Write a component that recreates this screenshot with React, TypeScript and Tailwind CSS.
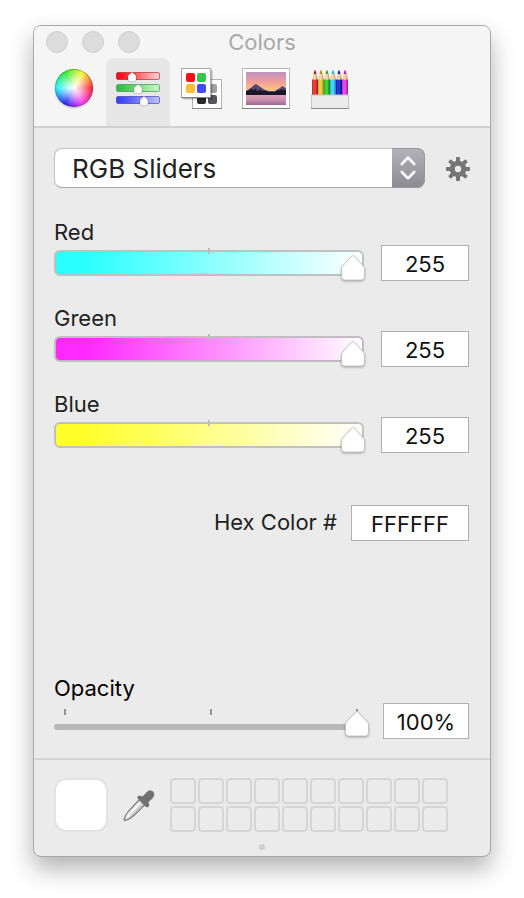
import React, { useState } from "react";
import clsx from "clsx";

interface IChannel {
  id: "red" | "green" | "blue";
  label: string;
  track: string;
}

const channels: IChannel[] = [
  { id: "red", label: "Red", track: "border-[#bcc2c2] from-[#2bffff]" },
  { id: "green", label: "Green", track: "border-[#c4bcc4] from-[#ff28ff]" },
  { id: "blue", label: "Blue", track: "border-[#c2c2bc] from-[#ffff2b]" },
];

const pencils = [
  { body: "#e0403c", dark: "#a82322", tip: "#b3161c" },
  { body: "#e6cc48", dark: "#a98c20", tip: "#b98a1c" },
  { body: "#3fd03c", dark: "#15901c", tip: "#1fae26" },
  { body: "#52cdf5", dark: "#1c8fc8", tip: "#27b4e4" },
  { body: "#2a35d8", dark: "#10149a", tip: "#1b1fc0" },
  { body: "#ea48e6", dark: "#b01cae", tip: "#c81fc6" },
];

const WheelIcon = () => (
  <span className="relative block size-[38px] rounded-full bg-[conic-gradient(from_90deg,#ff2a3c,#ff3cf0,#2a2af0,#2af5ff,#35ea35,#fff53c,#ff2a3c)] shadow-[0_1px_2px_rgba(0,0,0,0.25)]">
    <span className="absolute inset-0 rounded-full border border-black/25 bg-[radial-gradient(circle,#ffffff_0%,rgba(255,255,255,0.6)_30%,rgba(255,255,255,0)_68%)]" />
  </span>
);

const SlidersIcon = () => (
  <svg viewBox="0 0 64 68" className="h-full w-16">
    <defs>
      <linearGradient id="bar-red">
        <stop offset="0.1" stopColor="#fb0d1b" />
        <stop offset="1" stopColor="#fcd3d4" />
      </linearGradient>
      <linearGradient id="bar-green">
        <stop offset="0.1" stopColor="#35c048" />
        <stop offset="1" stopColor="#c9fbc9" />
      </linearGradient>
      <linearGradient id="bar-blue">
        <stop offset="0.1" stopColor="#3d43fa" />
        <stop offset="1" stopColor="#bfc1fb" />
      </linearGradient>
    </defs>
    {[
      { y: 14, x: 26, fill: "url(#bar-red)", stroke: "#a81820" },
      { y: 26, x: 32, fill: "url(#bar-green)", stroke: "#2f8a3c" },
      { y: 38, x: 38, fill: "url(#bar-blue)", stroke: "#2f34a8" },
    ].map((bar) => (
      <g key={bar.y}>
        <rect x="10.5" y={bar.y + 0.5} width="43" height="7" rx="1.5" fill={bar.fill} stroke={bar.stroke} strokeOpacity="0.6" />
        <path
          d={`M${bar.x} ${bar.y} l4 3.8 v4.2 q0 1.4 -1.4 1.4 h-5.2 q-1.4 0 -1.4 -1.4 v-4.2 z`}
          fill="#fff"
          stroke="#000"
          strokeOpacity="0.28"
          strokeWidth="0.7"
        />
      </g>
    ))}
  </svg>
);

const PalettesIcon = () => (
  <svg viewBox="0 0 64 68" className="h-full w-16">
    <rect x="22.5" y="21.5" width="29" height="29" fill="#fff" stroke="#b4b4b4" />
    <path d="M22 50.5h30" stroke="#858585" />
    <rect x="38" y="26" width="9" height="9" rx="2" fill="#a0a0a4" />
    <rect x="27" y="37" width="9" height="9" rx="2" fill="#2b2b2d" />
    <rect x="38" y="37" width="9" height="9" rx="2" fill="#56575a" />
    <rect x="13" y="12" width="30" height="30" rx="1" fill="#000" opacity="0.12" />
    <rect x="12" y="11" width="30" height="30" rx="1" fill="#000" opacity="0.15" />
    <rect x="11.5" y="10.5" width="29" height="29" fill="#fff" stroke="#a8a8a8" />
    <path d="M11 39.5h30" stroke="#808080" />
    <rect x="16" y="15" width="9" height="9" rx="2" fill="#fa0f1c" />
    <rect x="27" y="15" width="9" height="9" rx="2" fill="#35c74b" />
    <rect x="16" y="26" width="9" height="9" rx="2" fill="#fdbe33" />
    <rect x="27" y="26" width="9" height="9" rx="2" fill="#434af2" />
  </svg>
);

const PictureIcon = () => (
  <svg viewBox="0 0 64 68" className="h-full w-16">
    <defs>
      <linearGradient id="sky" x2="0" y2="1">
        <stop offset="0" stopColor="#bf92c0" />
        <stop offset="0.4" stopColor="#ee9c9c" />
        <stop offset="0.75" stopColor="#fdc182" />
        <stop offset="1" stopColor="#fdd08c" />
      </linearGradient>
      <linearGradient id="lake" x2="0" y2="1">
        <stop offset="0" stopColor="#e0a0ba" />
        <stop offset="0.4" stopColor="#d294b4" />
        <stop offset="1" stopColor="#9c6694" />
      </linearGradient>
    </defs>
    <rect x="8.5" y="10.5" width="47" height="40" fill="#fff" stroke="#b8b8b8" />
    <path d="M8 50.5h48" stroke="#808080" />
    <rect x="12" y="14" width="40" height="23" fill="url(#sky)" />
    <rect x="12" y="37" width="40" height="10" fill="url(#lake)" />
    <path d="M12 33l3-2 3-2 2-2 2-1 3 2 3 2 3 2 4 1h6l3-2 2-1 2-2 4 2v7H12z" fill="#5a4672" />
    <path d="M12 33l3-0.5 3-2 1 2 3-2 1 3 3-2 2 1.5 3-0.5 4 1.5h6l3-2 1 1 2-1.5 5 0.5v5H12z" fill="#1b1628" />
  </svg>
);

const PencilsIcon = () => (
  <svg viewBox="0 0 64 68" className="h-full w-16">
    {pencils.map((p, i) => (
      <g key={p.body} transform={`translate(${14 + i * 6} 12)`}>
        <path d="M0 10L1.6 3.6h2.8L6 10z" fill="#f0d2a8" />
        <path d="M4 3.6h0.5L6 10H4.7z" fill="#c49a68" />
        <path d="M1.6 4L2.4 0.6q0.6-0.9 1.2 0L4.4 4z" fill={p.tip} />
        <path d="M0 10l1.5-0.8L3 10l1.5-0.8L6 10v15H0z" fill={p.body} />
        <path d="M4.4 9.4L6 10v15H4.4z" fill={p.dark} />
        <path d="M0 10l0.8-0.4V25H0z" fill={p.dark} opacity="0.6" />
      </g>
    ))}
    <rect x="13.5" y="37" width="37" height="13.5" fill="#ececec" stroke="#c4c4c4" />
    <path d="M13 50.5h38" stroke="#8c8c8c" />
  </svg>
);

const GearIcon = () => (
  <svg viewBox="0 0 24 24" className="size-6">
    <g fill="#757575">
      {[0, 45, 90, 135].map((deg) => (
        <rect key={deg} x="10" y="0" width="4" height="24" rx="0.8" transform={`rotate(${deg} 12 12)`} />
      ))}
      <circle cx="12" cy="12" r="8.3" />
    </g>
    <circle cx="12" cy="12" r="3.2" fill="#ebebeb" />
  </svg>
);

const DropperIcon = () => (
  <svg viewBox="0 0 32 32" className="size-8">
    <defs>
      <linearGradient id="glass" x1="0.3" y1="0.3" x2="0.7" y2="0.7">
        <stop offset="0" stopColor="#f8f8f8" />
        <stop offset="0.5" stopColor="#d8d8d8" />
        <stop offset="1" stopColor="#b0b0b0" />
      </linearGradient>
    </defs>
    <path
      d="M16.5 10.5L6 21.5C3.4 24.4 1.9 27.2 1.2 30c-0.3 1.2 0.6 1.6 1.7 1.3C5.7 30.4 8.7 28.8 11.3 26.2L21.8 15.8z"
      fill="url(#glass)"
      stroke="#747474"
      strokeWidth="1.1"
    />
    <path d="M17.5 14L7 25 3.6 29.2" stroke="#fff" strokeWidth="1.6" fill="none" opacity="0.8" />
    <path
      d="M15 7.2c1.2-1.1 2.4-0.9 3.6 0.1l1.2-0.1 4-4.2c2-2.1 4.8-1.9 6.3-0.4s1.7 4.3-0.3 6.4l-4.1 4.1-0.2 1.2c1 1.2 1 2.3 0 3.4-0.8 0.8-2 0.8-2.8 0L15 10.1c-0.8-0.8-0.9-2 0-2.9z"
      fill="#717171"
    />
  </svg>
);

const ThumbShape = () => (
  <svg viewBox="0 0 24 26" className="block h-[26px] w-6 overflow-visible drop-shadow-[0_1px_1px_rgba(0,0,0,0.3)]">
    <path
      d="M10.8 1.2q1.2-1.2 2.4 0L22.4 11q1.1 1.2 1.1 2.8v8q0 3.2-3.2 3.2H3.7q-3.2 0-3.2-3.2v-8Q0.5 12.2 1.6 11z"
      fill="#fff"
      stroke="#bdbdbd"
      strokeWidth="0.8"
    />
  </svg>
);

const tabs = [
  { label: "Color Wheel", icon: <WheelIcon /> },
  { label: "Color Sliders", icon: <SlidersIcon /> },
  { label: "Color Palettes", icon: <PalettesIcon /> },
  { label: "Image Palettes", icon: <PictureIcon /> },
  { label: "Pencils", icon: <PencilsIcon /> },
];

const fieldClass =
  "h-9 shrink-0 border border-[#b0b0b0] bg-white pt-0.5 text-center text-[22px] text-[#111111] outline-none";

// left edge of a 24px thumb for a 0..1 position
const thumbLeft = (pos: number) => `calc(${pos * 100}% - ${pos * 24}px)`;

const App = () => {
  const [tab, setTab] = useState(1);
  const [rgb, setRgb] = useState({ red: 255, green: 255, blue: 255 });
  const [opacity, setOpacity] = useState(100);

  const hex = [rgb.red, rgb.green, rgb.blue]
    .map((v) => v.toString(16).padStart(2, "0"))
    .join("")
    .toUpperCase();

  const setChannel = (id: IChannel["id"], value: string) =>
    setRgb({ ...rgb, [id]: Math.max(0, Math.min(255, Number(value) || 0)) });

  return (
    <div className="bg-white px-[33px] pt-[25px] pb-[41px] font-['Inter','Liberation_Sans',sans-serif] text-[#222222]">
      <div className="overflow-hidden rounded-lg border border-[#a9a9a9] bg-[#ebebeb] shadow-[0_12px_24px_rgba(0,0,0,0.3)]">
        <header className="border-b-2 border-[#d0d0d0] bg-[#f5f5f5]">
          <div className="grid h-8 grid-cols-[1fr_auto_1fr] items-center px-3">
            <div className="flex gap-[14px]">
              {["Close", "Minimize", "Zoom"].map((name) => (
                <button
                  key={name}
                  aria-label={name}
                  className="size-[22px] rounded-full border border-[#cfcfcf] bg-[#dcdcdc]"
                />
              ))}
            </div>
            <h1 className="text-[22px] leading-[30px] text-[#a9a9a9]">Colors</h1>
          </div>
          <nav className="flex h-[68px] pl-2">
            {tabs.map((t, i) => (
              <button
                key={t.label}
                aria-label={t.label}
                onClick={() => setTab(i)}
                className={clsx(
                  "flex w-16 justify-center rounded-t-lg",
                  i === 0 && "pt-[11px]",
                  i === tab && "bg-[#e7e7e7]"
                )}
              >
                {t.icon}
              </button>
            ))}
          </nav>
        </header>

        <main className="pt-5 pr-[21px] pb-[19px] pl-5">
          <div className="-mr-px flex items-center gap-[21px]">
            <div className="relative flex-1">
              <select
                aria-label="Slider mode"
                className="h-10 w-full appearance-none rounded-lg border border-[#c2c2c2] border-b-[#a6a6a6] bg-white pr-10 pl-[17px] text-[26px] outline-none"
              >
                <option>RGB Sliders</option>
                <option>Grayscale Slider</option>
                <option>CMYK Sliders</option>
                <option>HSB Sliders</option>
              </select>
              <span className="pointer-events-none absolute inset-y-0 right-0 flex w-[33px] items-center justify-center rounded-r-lg border-y border-r border-[#98979d] bg-linear-to-b from-[#b3b2b8] to-[#8d8c93]">
                <svg viewBox="0 0 16 26" className="h-[26px] w-4" fill="none" stroke="#fff" strokeWidth="2.6" strokeLinecap="round" strokeLinejoin="round">
                  <path d="M1.8 9L8 2.6 14.2 9M1.8 17L8 23.4 14.2 17" />
                </svg>
              </span>
            </div>
            <button aria-label="Options" className="pt-0.5">
              <GearIcon />
            </button>
          </div>

          <div className="mt-[29px] flex flex-col gap-[22px]">
            {channels.map((c) => (
              <div key={c.id}>
                <label htmlFor={c.id} className="block h-7 text-[22px] leading-[30px]">
                  {c.label}
                </label>
                <div className="flex items-center gap-[17px]">
                  <div className="relative flex h-9 flex-1 items-center">
                    <div className={clsx("h-[26px] w-full rounded-md border-2 bg-linear-to-r/srgb from-10% to-white", c.track)} />
                    <span className="absolute top-[3px] left-1/2 h-1.5 w-0.5 -translate-x-1/2 bg-[#bdbdbd]" />
                    <div className="pointer-events-none absolute -right-px bottom-0 left-0 h-[26px]">
                      <span className="absolute" style={{ left: thumbLeft(rgb[c.id] / 255) }}>
                        <ThumbShape />
                      </span>
                    </div>
                    <input
                      id={c.id}
                      type="range"
                      min={0}
                      max={255}
                      value={rgb[c.id]}
                      onChange={(e) => setChannel(c.id, e.target.value)}
                      className="absolute inset-0 h-full w-full opacity-0"
                    />
                  </div>
                  <input
                    aria-label={`${c.label} value`}
                    value={rgb[c.id]}
                    onChange={(e) => setChannel(c.id, e.target.value)}
                    className={clsx(fieldClass, "w-22")}
                  />
                </div>
              </div>
            ))}
          </div>

          <div className="mt-[52px] flex items-center justify-end gap-[14px]">
            <label htmlFor="hex" className="pb-0.5 text-[22px] leading-[30px]">
              Hex Color #
            </label>
            <input id="hex" value={hex} readOnly className={clsx(fieldClass, "w-[118px]")} />
          </div>

          <div className="mt-[134px]">
            <label htmlFor="opacity" className="block h-7 text-[22px] leading-[26px] text-black">
              Opacity
            </label>
            <div className="flex items-center gap-[14px]">
              <div className="relative h-9 flex-1">
                <div className="flex justify-between pt-1.5 pr-[11px] pl-[10px]">
                  <span className="h-1.5 w-0.5 bg-[#949494]" />
                  <span className="h-1.5 w-0.5 bg-[#949494]" />
                  <span className="h-1.5 w-0.5 bg-[#949494]" />
                </div>
                <div className="mt-[9px] h-1.5 rounded-full bg-[#b7b7b7]" />
                <div className="pointer-events-none absolute inset-x-0 bottom-0.5 h-[26px]">
                  <span className="absolute" style={{ left: thumbLeft(opacity / 100) }}>
                    <ThumbShape />
                  </span>
                </div>
                <input
                  id="opacity"
                  type="range"
                  min={0}
                  max={100}
                  value={opacity}
                  onChange={(e) => setOpacity(Number(e.target.value))}
                  className="absolute inset-0 h-full w-full opacity-0"
                />
              </div>
              <input aria-label="Opacity value" value={`${opacity}%`} readOnly className={clsx(fieldClass, "w-[86px]")} />
            </div>
          </div>
        </main>

        <footer className="border-t-2 border-[#d4d4d4] px-5 pt-[18px] pb-1.5">
          <div className="flex items-center">
            <div className="size-[54px] rounded-xl border-2 border-[#e3e3e3] bg-white" />
            <button aria-label="Pick a color" className="ml-[15px]">
              <DropperIcon />
            </button>
            <div className="ml-[15px] grid grid-cols-10 gap-0.5">
              {Array.from({ length: 20 }, (_, i) => (
                <span key={i} className="size-[26px] rounded-[4px] border-2 border-[#d5d5d5]" />
              ))}
            </div>
          </div>
          <div className="mx-auto mt-3 size-1.5 rounded-full bg-[#cfcfcf]" />
        </footer>
      </div>
    </div>
  );
};

export default App;
